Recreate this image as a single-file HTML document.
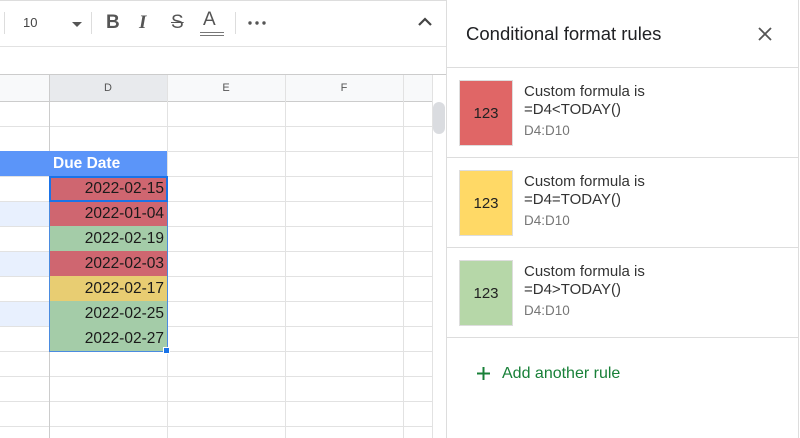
<!DOCTYPE html><html><head><style>
*{margin:0;padding:0;box-sizing:border-box}
body{width:800px;height:438px;overflow:hidden;background:#fff;font-family:"Liberation Sans",Arial,sans-serif;position:relative}
.a{position:absolute}
.hl{position:absolute;height:1px;background:#e2e2e2}
.vl{position:absolute;width:1px;background:#e2e2e2}
.cell{position:absolute;left:49px;width:118px;height:25px;text-align:right;padding-right:3px;font-size:15.5px;line-height:26px;color:#1a1a1a}
.sw{position:absolute;left:459px;width:54px;height:66px;font-size:15px;line-height:66px;text-align:center;color:#222;border:1px solid #ddd}
.t{position:absolute;left:524px;font-size:15px;color:#333;line-height:18px}
.r{position:absolute;left:524px;font-size:13.5px;color:#777}
</style></head><body>
<div class="a" style="left:0;top:0;width:446px;height:1px;background:#ddd"></div>
<div class="a" style="left:4px;top:12px;width:1px;height:22px;background:#ddd"></div>
<div class="a" style="left:23px;top:15px;font-size:13px;color:#444">10</div>
<div class="a" style="left:72px;top:22px;width:0;height:0;border-left:5px solid transparent;border-right:5px solid transparent;border-top:5px solid #555"></div>
<div class="a" style="left:91px;top:12px;width:1px;height:22px;background:#ddd"></div>
<div class="a" style="left:106px;top:12px;font-size:19px;font-weight:bold;color:#555">B</div>
<div class="a" style="left:139px;top:12px;font-size:19px;font-style:italic;font-family:'Liberation Serif',serif;font-weight:bold;color:#555">I</div>
<div class="a" style="left:171px;top:12px;font-size:19px;color:#555;text-decoration:line-through">S</div>
<div class="a" style="left:203px;top:9px;font-size:19px;color:#555">A</div>
<div class="a" style="left:200px;top:32px;width:24px;height:4px;border-top:1.5px solid #777;border-bottom:1.5px solid #777"></div>
<div class="a" style="left:235px;top:12px;width:1px;height:22px;background:#ddd"></div>
<svg class="a" style="left:248px;top:21px" width="18" height="4"><circle cx="2" cy="2" r="1.7" fill="#555"/><circle cx="9" cy="2" r="1.7" fill="#555"/><circle cx="16" cy="2" r="1.7" fill="#555"/></svg>
<svg class="a" style="left:417px;top:17px" width="16" height="10"><path d="M2 8 L8 2 L14 8" stroke="#444" stroke-width="2.2" fill="none"/></svg>
<div class="hl" style="left:0;top:46px;width:446px"></div>
<div class="hl" style="left:0;top:74px;width:446px;background:#ccc"></div>
<div class="a" style="left:0;top:75px;width:432px;height:26px;background:#f8f9fa"></div>
<div class="a" style="left:49px;top:75px;width:118px;height:26px;background:#e8eaed;text-align:center;font-size:11px;line-height:26px;color:#555">D</div>
<div class="a" style="left:167px;top:75px;width:118px;height:26px;text-align:center;font-size:11px;line-height:26px;color:#555">E</div>
<div class="a" style="left:285px;top:75px;width:118px;height:26px;text-align:center;font-size:11px;line-height:26px;color:#555">F</div>
<div class="hl" style="left:0;top:101px;width:432px;background:#ccc"></div>
<div class="hl" style="left:0;top:126px;width:432px"></div>
<div class="hl" style="left:0;top:151px;width:432px"></div>
<div class="hl" style="left:0;top:176px;width:432px"></div>
<div class="hl" style="left:0;top:201px;width:432px"></div>
<div class="hl" style="left:0;top:226px;width:432px"></div>
<div class="hl" style="left:0;top:251px;width:432px"></div>
<div class="hl" style="left:0;top:276px;width:432px"></div>
<div class="hl" style="left:0;top:301px;width:432px"></div>
<div class="hl" style="left:0;top:326px;width:432px"></div>
<div class="hl" style="left:0;top:351px;width:432px"></div>
<div class="hl" style="left:0;top:376px;width:432px"></div>
<div class="hl" style="left:0;top:401px;width:432px"></div>
<div class="hl" style="left:0;top:426px;width:432px"></div>
<div class="vl" style="left:49px;top:75px;height:363px;background:#ccc"></div>
<div class="vl" style="left:167px;top:75px;height:363px"></div>
<div class="vl" style="left:285px;top:75px;height:363px"></div>
<div class="vl" style="left:403px;top:75px;height:363px"></div>
<div class="vl" style="left:432px;top:75px;height:363px"></div>
<div class="a" style="left:433px;top:102px;width:12px;height:32px;border-radius:6px;background:#dadce0"></div>
<div class="vl" style="left:446px;top:0;height:438px;background:#ddd"></div>
<div class="a" style="left:0;top:151px;width:167px;height:25px;background:#5b95f9"></div>
<div class="a" style="left:53px;top:151px;font-size:15.5px;line-height:26px;color:#fff;font-weight:bold">Due Date</div>
<div class="a" style="left:0;top:202px;width:49px;height:24px;background:#e8f0fe"></div>
<div class="a" style="left:0;top:252px;width:49px;height:24px;background:#e8f0fe"></div>
<div class="a" style="left:0;top:302px;width:49px;height:24px;background:#e8f0fe"></div>
<div class="cell" style="top:176px;background:#cf6670">2022-02-15</div>
<div class="cell" style="top:201px;background:#cf6670">2022-01-04</div>
<div class="cell" style="top:226px;background:#a4cca8">2022-02-19</div>
<div class="cell" style="top:251px;background:#cf6670">2022-02-03</div>
<div class="cell" style="top:276px;background:#e8cd72">2022-02-17</div>
<div class="cell" style="top:301px;background:#a4cca8">2022-02-25</div>
<div class="cell" style="top:326px;background:#a4cca8">2022-02-27</div>
<div class="a" style="left:49px;top:176px;width:119px;height:176px;border:1px solid #4a8be0"></div>
<div class="a" style="left:49px;top:176px;width:119px;height:26px;border:2px solid #1a73e8"></div>
<div class="a" style="left:163px;top:347px;width:7px;height:7px;background:#1a73e8;border:1px solid #fff"></div>
<div class="a" style="left:466px;top:23px;font-size:18.5px;color:#202124">Conditional format rules</div>
<svg class="a" style="left:758px;top:27px" width="14" height="14"><path d="M1 1L13 13M13 1L1 13" stroke="#555" stroke-width="1.8"/></svg>
<div class="hl" style="left:447px;top:67px;width:351px;background:#ddd"></div>
<div class="hl" style="left:447px;top:157px;width:351px;background:#ddd"></div>
<div class="hl" style="left:447px;top:247px;width:351px;background:#ddd"></div>
<div class="hl" style="left:447px;top:337px;width:351px;background:#ddd"></div>
<div class="vl" style="left:798px;top:0;height:438px;background:#ddd"></div>
<div class="sw" style="top:80px;background:#e06666">123</div>
<div class="t" style="top:83px">Custom formula is<br>=D4&lt;TODAY()</div>
<div class="r" style="top:123px">D4:D10</div>
<div class="sw" style="top:170px;background:#ffd966">123</div>
<div class="t" style="top:173px">Custom formula is<br>=D4=TODAY()</div>
<div class="r" style="top:213px">D4:D10</div>
<div class="sw" style="top:260px;background:#b6d7a8">123</div>
<div class="t" style="top:263px">Custom formula is<br>=D4&gt;TODAY()</div>
<div class="r" style="top:303px">D4:D10</div>
<svg class="a" style="left:477px;top:367px" width="13" height="13"><path d="M6.5 0V13M0 6.5H13" stroke="#188038" stroke-width="2"/></svg>
<div class="a" style="left:502px;top:365px;font-size:16px;color:#188038">Add another rule</div>
</body></html>
